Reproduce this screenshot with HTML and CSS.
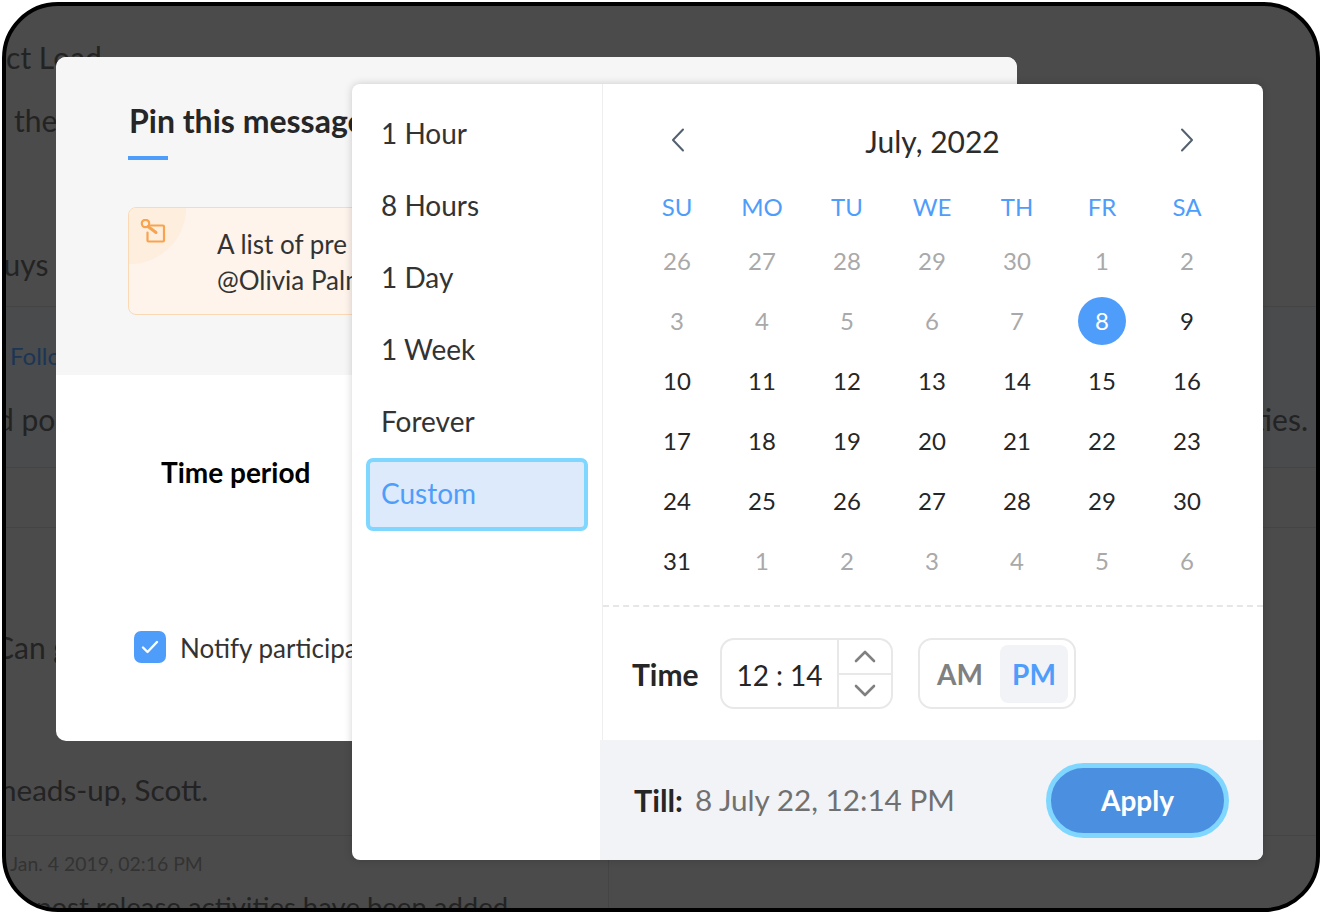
FILE: index.html
```html
<!DOCTYPE html>
<html lang="en">
<head>
    <meta charset="UTF-8">
    <title>Pin this message</title>
    <link rel="stylesheet" href="styles.css">
</head>
<body>
    <div class="frame">
        <!-- Dimmed conversation behind the dialog -->
        <div class="chat">
            <div class="chat-row row-one">
                <div class="chat-line line-lead">Project Load</div>
                <div class="chat-line line-the">the</div>
                <div class="chat-line line-guys">guys a</div>
            </div>
            <div class="chat-row row-two">
                <div class="chat-link">Follow</div>
                <div class="chat-split">
                    <span class="line-pos">d post</span>
                    <span>ties.</span>
                </div>
            </div>
            <div class="chat-row row-three"></div>
            <div class="chat-row row-four">
                <div class="chat-line line-can">Can g</div>
                <div class="chat-line line-heads">heads-up, Scott.</div>
            </div>
            <div class="chat-row row-five">
                <div class="chat-side">
                    <div class="chat-date">Jan. 4 2019, 02:16 PM</div>
                    <div class="chat-line line-post">post release activities have been added</div>
                </div>
            </div>
        </div>

        <!-- Pin dialog -->
        <div class="pin-modal">
            <div class="pin-top">
                <h2 class="pin-title">Pin this message</h2>
                <div class="pin-rule"></div>
                <div class="pin-note">
                    <span class="note-corner">
                        <svg class="note-icon" width="28" height="28" viewBox="0 0 28 28" fill="none" stroke="#f7a350" stroke-width="2.200" stroke-linecap="round" stroke-linejoin="round">
                            <path d="M10.5 6.5h13.5a1 1 0 0 1 1 1v14a1 1 0 0 1-1 1H9.500a1 1 0 0 1-1-1v-8"/>
                            <circle cx="6.500" cy="4.500" r="3.700"/>
                            <path d="M9 7.500l8 6" stroke-width="3"/>
                        </svg>
                    </span>
                    <div class="note-text">A list of pre release activities<br>@Olivia Palmer</div>
                </div>
            </div>
            <div class="pin-bottom">
                <div class="pin-label">Time period</div>
                <div class="pin-notify">
                    <span class="check-box">
                        <svg width="20" height="16" viewBox="0 0 20 16" fill="none" stroke="#fff" stroke-width="2.400" stroke-linecap="round" stroke-linejoin="round"><path d="M3 8.500l4.500 4.500L17 3"/></svg>
                    </span>
                    <span class="notify-text">Notify participants</span>
                </div>
            </div>
        </div>

        <!-- Time picker popover -->
        <div class="picker">
            <div class="picker-main">
                <ul class="period-list">
                    <li class="period-item">1 Hour</li>
                    <li class="period-item">8 Hours</li>
                    <li class="period-item">1 Day</li>
                    <li class="period-item">1 Week</li>
                    <li class="period-item">Forever</li>
                    <li class="period-item active">Custom</li>
                </ul>
                <div class="cal">
                    <div class="cal-body">
                        <div class="cal-head">
                            <svg class="cal-arrow" width="16" height="26" viewBox="0 0 16 26" fill="none" stroke="#52606f" stroke-width="2" stroke-linecap="round" stroke-linejoin="round"><path d="M13 2.500L3 13l10 10.500"/></svg>
                            <div class="cal-title">July, 2022</div>
                            <svg class="cal-arrow" width="16" height="26" viewBox="0 0 16 26" fill="none" stroke="#52606f" stroke-width="2" stroke-linecap="round" stroke-linejoin="round"><path d="M3 2.500L13 13 3 23.500"/></svg>
                        </div>
                        <div class="cal-days">
                            <span>SU</span><span>MO</span><span>TU</span><span>WE</span><span>TH</span><span>FR</span><span>SA</span>
                        </div>
                        <div class="cal-grid">
                            <span class="off">26</span><span class="off">27</span><span class="off">28</span><span class="off">29</span><span class="off">30</span><span class="off">1</span><span class="off">2</span>
                            <span class="off">3</span><span class="off">4</span><span class="off">5</span><span class="off">6</span><span class="off">7</span><span class="selected">8</span><span>9</span>
                            <span>10</span><span>11</span><span>12</span><span>13</span><span>14</span><span>15</span><span>16</span>
                            <span>17</span><span>18</span><span>19</span><span>20</span><span>21</span><span>22</span><span>23</span>
                            <span>24</span><span>25</span><span>26</span><span>27</span><span>28</span><span>29</span><span>30</span>
                            <span>31</span><span class="off">1</span><span class="off">2</span><span class="off">3</span><span class="off">4</span><span class="off">5</span><span class="off">6</span>
                        </div>
                    </div>
                    <div class="time-row">
                        <span class="time-label">Time</span>
                        <div class="time-box">
                            <div class="time-value">12<span class="time-colon">:</span>14</div>
                            <div class="time-steps">
                                <span class="time-step">
                                    <svg width="24" height="14" viewBox="0 0 24 14" fill="none" stroke="#808080" stroke-width="2.600" stroke-linecap="round" stroke-linejoin="round"><path d="M3 12l9-9 9 9"/></svg>
                                </span>
                                <span class="time-step">
                                    <svg width="24" height="14" viewBox="0 0 24 14" fill="none" stroke="#808080" stroke-width="2.600" stroke-linecap="round" stroke-linejoin="round"><path d="M3 2l9 9 9-9"/></svg>
                                </span>
                            </div>
                        </div>
                        <div class="ampm">
                            <span class="ampm-item">AM</span>
                            <span class="ampm-item on">PM</span>
                        </div>
                    </div>
                </div>
            </div>
            <div class="picker-foot">
                <div class="till"><b>Till:</b><span>8 July 22, 12:14 PM</span></div>
                <button class="apply-btn">Apply</button>
            </div>
        </div>
    </div>
</body>
</html>
```

FILE: styles.css
```css
* {
    box-sizing: border-box;
}

html, body {
    margin: 0;
    padding: 0;
    height: 914px;
    overflow: hidden;
    background-color: #ffffff;
}

body {
    font-family: 'Lato', sans-serif;
    padding: 2px 0 2px 2px;
}

.frame {
    position: relative;
    width: 1318px;
    height: 910px;
    border: 4px solid #000000;
    border-radius: 56px;
    background-color: #4b4b4b;
    overflow: hidden;
}

/* Background conversation */
.chat {
    display: flex;
    flex-direction: column;
    height: 100%;
    font-size: 30px;
    line-height: 40px;
    color: #232323;
}

.chat-row {
    border-bottom: 1px solid #444444;
    flex-shrink: 0;
}

.row-one {
    height: 301px;
    padding-top: 31px;
}

.row-two {
    height: 161px;
    padding-top: 29px;
    background-color: #4a4b4d;
}

.row-three {
    height: 60px;
}

.row-four {
    height: 308px;
    padding-top: 99px;
}

.row-five {
    flex: 1;
    border-bottom: none;
}

.line-lead {
    margin-left: -68px;
    white-space: nowrap;
}

.line-the {
    margin-top: 23px;
    margin-left: 8px;
}

.line-guys {
    margin-top: 104px;
    margin-left: -18px;
}

.chat-link {
    margin-left: 4px;
    font-size: 24px;
    line-height: 40px;
    color: #1d3554;
}

.chat-split {
    display: flex;
    justify-content: space-between;
    margin-top: 23px;
    padding-right: 8px;
}

.line-pos {
    margin-left: -9px;
}

.line-can {
    margin-left: -12px;
}

.line-heads {
    margin-top: 103px;
    margin-left: -6px;
    font-size: 29.600px;
}

.chat-side {
    width: 603px;
    height: 100%;
    border-right: 1px solid #444444;
}

.chat-date {
    padding-top: 8px;
    margin-left: 4px;
    font-size: 19.400px;
    line-height: 40px;
    color: #333333;
}

.line-post {
    margin-top: 3px;
    margin-left: 30px;
    font-size: 27.500px;
    white-space: nowrap;
}

/* Pin dialog */
.pin-modal {
    position: absolute;
    left: 50px;
    top: 51px;
    width: 961px;
    height: 684px;
    border-radius: 10px;
    background-color: #ffffff;
    overflow: hidden;
}

.pin-top {
    height: 318px;
    padding: 44px 72px 0;
    background-color: #f6f6f6;
}

.pin-title {
    margin: 0 0 0 1px;
    font-size: 32px;
    line-height: 40px;
    font-weight: 700;
    color: #262626;
}

.pin-rule {
    width: 40px;
    height: 4px;
    margin-top: 15px;
    background-color: #4f9dfb;
}

.pin-note {
    position: relative;
    display: flex;
    width: 820px;
    height: 108px;
    margin-top: 47px;
    border: 1px solid #fbd9b5;
    border-radius: 8px;
    background-color: #fef4ec;
    overflow: hidden;
}

.note-corner {
    width: 57px;
    height: 56px;
    padding: 11px 0 0 10px;
    border-bottom-right-radius: 57px;
    background-color: #fdeedd;
    flex-shrink: 0;
}

.note-icon {
    display: block;
}

.note-text {
    padding: 18px 0 0 31px;
    font-size: 26px;
    line-height: 36px;
    color: #333333;
    white-space: nowrap;
}

.pin-bottom {
    padding: 78px 78px 0 105px;
}

.pin-label {
    margin-top: 0;
    font-size: 28px;
    line-height: 38px;
    font-weight: 700;
    color: #000000;
}

.pin-notify {
    display: flex;
    align-items: center;
    gap: 14px;
    margin-top: 139px;
    margin-left: -27px;
    font-size: 26px;
    color: #333333;
}

.notify-text {
    padding-top: 2px;
}

.check-box {
    display: flex;
    align-items: center;
    justify-content: center;
    width: 32px;
    height: 32px;
    border-radius: 7px;
    background-color: #4f9dfb;
}

/* Time picker */
.picker {
    position: absolute;
    left: 346px;
    top: 78px;
    width: 911px;
    height: 776px;
    display: flex;
    flex-direction: column;
    border-radius: 8px;
    background-color: #ffffff;
    box-shadow: 0 0 8px rgba(0, 0, 0, 0.18);
    overflow: hidden;
}

.picker-main {
    display: flex;
    height: 656px;
}

.period-list {
    width: 251px;
    margin: 0;
    padding: 13px 14px;
    list-style: none;
    border-right: 1px solid #eeeeee;
    flex-shrink: 0;
}

.period-item {
    height: 72px;
    padding: 0 15px;
    font-size: 28px;
    line-height: 72px;
    color: #333333;
}

.period-item.active {
    height: 73px;
    width: 222px;
    margin-top: 1px;
    line-height: 63px;
    padding: 0 11px;
    border: 4px solid #7fd7ff;
    border-radius: 7px;
    background-color: #dceafc;
    color: #4f9dfb;
}

.cal {
    flex: 1;
    display: flex;
    flex-direction: column;
}

.cal-body {
    height: 523px;
    padding: 36px 33px 0 32px;
    border-bottom: 2px dashed #e6e6e6;
}

.cal-head {
    display: flex;
    align-items: center;
    justify-content: space-between;
    height: 42px;
    padding: 0 35px;
}

.cal-arrow {
    margin-bottom: 2px;
}

.cal-title {
    font-size: 30px;
    line-height: 42px;
    color: #2c2c2c;
}

.cal-days,
.cal-grid {
    display: grid;
    grid-template-columns: repeat(7, 85px);
    justify-items: center;
    align-items: center;
    margin-left: -0.5px;
}

.cal-days {
    height: 40px;
    margin-top: 24px;
    font-size: 24px;
    color: #4f9dfb;
}

.cal-grid {
    grid-auto-rows: 60px;
    margin-top: 5px;
    font-size: 24px;
    color: #262626;
}

.cal-grid span {
    display: flex;
    align-items: center;
    justify-content: center;
    width: 48px;
    height: 48px;
    padding-bottom: 2px;
}

.cal-grid .off {
    color: #a9a9a9;
}

.cal-grid .selected {
    border-radius: 50%;
    background-color: #4f9dfb;
    color: #ffffff;
}

.time-row {
    display: flex;
    align-items: center;
    flex: 1;
    padding-left: 29px;
}

.time-label {
    width: 88px;
    font-size: 30px;
    font-weight: 700;
    color: #262626;
}

.time-box {
    display: flex;
    width: 173px;
    height: 71px;
    border: 2px solid #e8e8e8;
    border-radius: 14px;
    margin-right: 25px;
}

.time-value {
    width: 117px;
    border-right: 2px solid #e8e8e8;
    font-size: 28px;
    line-height: 71px;
    text-align: center;
    color: #262626;
    white-space: nowrap;
}

.time-colon {
    margin: 0 7px;
}

.time-steps {
    flex: 1;
    display: flex;
    flex-direction: column;
}

.time-step {
    flex: 1;
    display: flex;
    align-items: center;
    justify-content: center;
}

.time-step:first-child {
    border-bottom: 2px solid #e8e8e8;
}

.ampm {
    display: flex;
    align-items: center;
    justify-content: flex-end;
    width: 158px;
    height: 71px;
    padding-right: 6px;
    border: 2px solid #e8e8e8;
    border-radius: 14px;
}

.ampm-item {
    display: flex;
    align-items: center;
    justify-content: center;
    width: 68px;
    height: 58px;
    border-radius: 8px;
    font-size: 28px;
    font-weight: 700;
    color: #808080;
}

.ampm-item:first-child {
    margin-right: 6px;
}

.ampm-item.on {
    background-color: #f2f3f7;
    color: #4f9dfb;
}

.picker-foot {
    flex: 1;
    display: flex;
    align-items: center;
    justify-content: space-between;
    margin-left: 248px;
    padding: 0 34px;
    background-color: #f2f3f7;
}

.till {
    display: flex;
    gap: 12px;
    font-size: 29.700px;
    color: #707070;
}

.till b {
    font-size: 30.500px;
    color: #262626;
}

.apply-btn {
    width: 183px;
    height: 75px;
    border: 5px solid #7fd7ff;
    border-radius: 38px;
    background-color: #4a8fe0;
    font-family: inherit;
    font-size: 28px;
    font-weight: 700;
    color: #ffffff;
}
```
